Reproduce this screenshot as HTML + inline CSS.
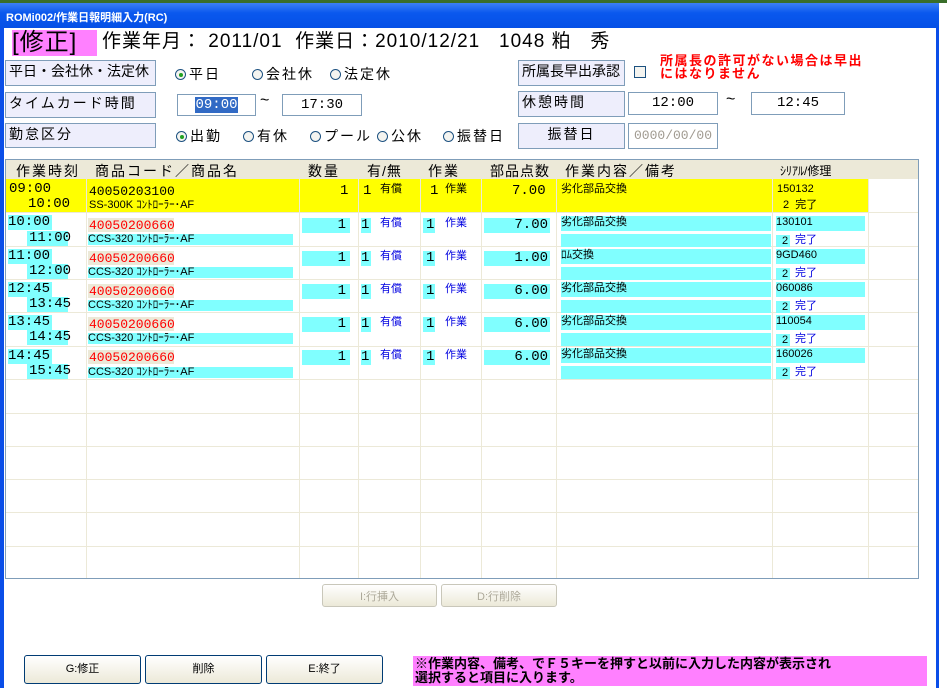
<!DOCTYPE html>
<html><head><meta charset="utf-8"><style>
*{margin:0;padding:0;box-sizing:border-box}
body{width:947px;height:688px;background:#fff;position:relative;overflow:hidden;font-family:"Liberation Sans","Noto Sans CJK JP",sans-serif;color:#000}
.a{position:absolute;white-space:nowrap}
.lbl{position:absolute;background:#eeeefc;border:1px solid #7f9db9;font-size:14px;padding:1px 3px;line-height:18px;letter-spacing:2px;white-space:nowrap;overflow:hidden}
.in{position:absolute;background:#fff;border:1px solid #7f9db9;font-size:14px;text-align:center;line-height:20px;font-family:"Liberation Mono",monospace}
.rb{position:absolute;font-size:14px;line-height:16px;letter-spacing:2px;white-space:nowrap}
.rb i{display:inline-block;width:11px;height:11px;border:1px solid #1c5180;border-radius:50%;vertical-align:-1px;margin-right:3px;background:#f4f4f0;position:relative}
.rb i.on:after{content:"";position:absolute;left:3px;top:3px;width:4px;height:4px;background:#21a121;border-radius:50%}
.c{position:absolute;background:#80ffff;white-space:nowrap}
.t{font-size:14px;line-height:15px;font-family:"Liberation Mono","Noto Sans CJK JP",monospace}
.s{font-size:11px;line-height:13px}
.bl{color:#0000e0}
.vl{position:absolute;top:160px;width:1px;height:418px;background:#ece9d8}
.hl{position:absolute;left:6px;width:912px;height:1px;background:#ece9d8}
.hd{position:absolute;top:163px;font-size:14px;line-height:16px;letter-spacing:2px;white-space:nowrap}
.btn{position:absolute;border:1px solid #003c74;border-radius:3px;background:linear-gradient(#fff,#ece9d8);font-size:11px;text-align:center;line-height:24px}
</style></head><body>
<div class="a" style="left:0;top:0;width:947px;height:3px;background:#3a6e2a"></div>
<div class="a" style="left:0;top:3px;width:939px;height:25px;background:linear-gradient(#3d80f5,#0a58ee 40%,#0550e6)"></div>
<div class="a" style="left:6px;top:9px;color:#fff;font-size:11px;font-weight:bold">ROMi002/作業日報明細入力(RC)</div>
<div class="a" style="left:0;top:28px;width:4px;height:660px;background:#0a4ee8"></div>
<div class="a" style="left:936px;top:28px;width:3px;height:660px;background:#0a4ee8"></div>

<div class="a" style="left:12px;top:30px;width:85px;height:26px;background:#ff80ff;font-size:24px;line-height:26px;letter-spacing:1px">[修正]</div>
<div class="a" style="left:102px;top:30px;font-size:19px;line-height:24px;letter-spacing:1px">作業年月： 2011/01&nbsp; 作業日：2010/12/21&nbsp;&nbsp; 1048 粕&nbsp;&nbsp; 秀</div>

<div class="lbl" style="left:5px;top:60px;width:151px;height:26px;letter-spacing:0">平日・会社休・法定休</div>
<div class="lbl" style="left:5px;top:92px;width:151px;height:26px">タイムカード時間</div>
<div class="lbl" style="left:5px;top:123px;width:151px;height:25px">勤怠区分</div>
<div class="rb" style="left:175px;top:66px"><i class="on"></i>平日</div>
<div class="rb" style="left:252px;top:66px"><i></i>会社休</div>
<div class="rb" style="left:330px;top:66px"><i></i>法定休</div>
<div class="in" style="left:177px;top:94px;width:79px;height:22px"><span style="background:#316ac5;color:#fff">09:00</span></div>
<div class="a" style="left:260px;top:92px;font-size:16px">~</div>
<div class="in" style="left:282px;top:94px;width:80px;height:22px">17:30</div>
<div class="rb" style="left:176px;top:128px"><i class="on"></i>出勤</div>
<div class="rb" style="left:243px;top:128px"><i></i>有休</div>
<div class="rb" style="left:310px;top:128px"><i></i>プール</div>
<div class="rb" style="left:377px;top:128px"><i></i>公休</div>
<div class="rb" style="left:443px;top:128px"><i></i>振替日</div>

<div class="lbl" style="left:518px;top:60px;width:107px;height:26px;letter-spacing:0">所属長早出承認</div>
<div class="a" style="left:634px;top:66px;width:12px;height:12px;border:1px solid #1c5180;background:#f4f4f0"></div>
<div class="a" style="left:660px;top:54px;color:#f00;font-weight:bold;font-size:13px;line-height:13px;letter-spacing:1.5px">所属長の許可がない場合は早出<br>にはなりません</div>
<div class="lbl" style="left:518px;top:91px;width:107px;height:26px">休憩時間</div>
<div class="in" style="left:628px;top:92px;width:90px;height:23px">12:00</div>
<div class="a" style="left:726px;top:91px;font-size:16px">~</div>
<div class="in" style="left:751px;top:92px;width:94px;height:23px">12:45</div>
<div class="lbl" style="left:518px;top:123px;width:107px;height:26px;text-align:center">振替日</div>
<div class="in" style="left:628px;top:123px;width:90px;height:26px;color:#a09a90;line-height:24px;font-size:13px">0000/00/00</div>

<!-- grid -->
<div class="a" style="left:5px;top:159px;width:914px;height:420px;border:1px solid #7f9db9;background:#fff"></div>
<div class="a" style="left:6px;top:160px;width:912px;height:19px;background:#ece9d8"></div>
<div class="a" style="left:6px;top:179px;width:863px;height:33px;background:#ffff00"></div>
<div class="hd" style="left:16px">作業時刻</div>
<div class="hd" style="left:95px">商品コード／商品名</div>
<div class="hd" style="left:308px">数量</div>
<div class="hd" style="left:367px;letter-spacing:1px">有/無</div>
<div class="hd" style="left:428px">作業</div>
<div class="hd" style="left:490px;letter-spacing:1px">部品点数</div>
<div class="hd" style="left:565px">作業内容／備考</div>
<div class="hd" style="left:780px;font-size:12px;letter-spacing:0">ｼﾘｱﾙ/修理</div>
<div class="vl" style="left:86px"></div><div class="vl" style="left:299px"></div><div class="vl" style="left:358px"></div><div class="vl" style="left:420px"></div><div class="vl" style="left:481px"></div><div class="vl" style="left:556px"></div><div class="vl" style="left:772px"></div><div class="vl" style="left:868px"></div>
<div class="hl" style="top:212px"></div><div class="hl" style="top:246px"></div><div class="hl" style="top:279px"></div><div class="hl" style="top:312px"></div><div class="hl" style="top:346px"></div><div class="hl" style="top:379px"></div><div class="hl" style="top:413px"></div><div class="hl" style="top:446px"></div><div class="hl" style="top:479px"></div><div class="hl" style="top:512px"></div><div class="hl" style="top:546px"></div>

<!-- row1 -->
<div class="a t" style="left:9px;top:182px">09:00</div>
<div class="a t" style="left:28px;top:197px">10:00</div>
<div class="a t" style="left:89px;top:184px;font-size:13px">40050203100</div>
<div class="a s" style="left:89px;top:199px">SS-300K ｺﾝﾄﾛｰﾗｰ･AF</div>
<div class="a t" style="left:340px;top:184px">1</div>
<div class="a t" style="left:363px;top:184px">1</div><div class="a s" style="left:380px;top:183px">有償</div>
<div class="a t" style="left:430px;top:184px">1</div><div class="a s" style="left:445px;top:183px">作業</div>
<div class="a t" style="left:512px;top:184px">7.00</div>
<div class="a s" style="left:561px;top:183px">劣化部品交換</div>
<div class="a s" style="left:777px;top:183px">150132</div>
<div class="a s" style="left:783px;top:199px">2&nbsp; 完了</div>

<!-- buttons -->
<div class="btn" style="left:322px;top:584px;width:115px;height:23px;border-color:#c9c7ba;color:#aca899">I:行挿入</div>
<div class="btn" style="left:441px;top:584px;width:116px;height:23px;border-color:#c9c7ba;color:#aca899">D:行削除</div>
<div class="btn" style="left:24px;top:655px;width:117px;height:29px;line-height:27px">G:修正</div>
<div class="btn" style="left:145px;top:655px;width:117px;height:29px;line-height:27px">削除</div>
<div class="btn" style="left:266px;top:655px;width:117px;height:29px;line-height:27px">E:終了</div>
<div class="a" style="left:413px;top:656px;width:514px;height:30px;background:#ff80ff;font-size:13px;font-weight:bold;line-height:14px;padding:1px 2px">※作業内容、備考、でＦ５キーを押すと以前に入力した内容が表示され<br>選択すると項目に入ります。</div>

<!-- row 2 -->
<div class="c t" style="left:8px;top:215px;width:44px;height:15px">10:00</div>
<div class="c t" style="left:27px;top:231px;width:41px;height:15px;padding-left:2px">11:00</div>
<div class="a t" style="left:88px;top:218px;width:86px;height:14px;background:#ece9d8;color:#f00;padding-left:1px;font-size:13px">40050200660</div>
<div class="c s" style="left:88px;top:234px;width:205px;height:11px;line-height:11px">CCS-320 ｺﾝﾄﾛｰﾗｰ･AF</div>
<div class="c t" style="left:302px;top:218px;width:48px;height:15px;text-align:right;padding-right:4px">1</div>
<div class="c t" style="left:361px;top:218px;width:10px;height:15px">1</div><div class="a s bl" style="left:380px;top:217px">有償</div>
<div class="c t" style="left:423px;top:218px;width:12px;height:15px;padding-left:3px">1</div><div class="a s bl" style="left:445px;top:217px">作業</div>
<div class="c t" style="left:484px;top:218px;width:66px;height:15px;text-align:right;padding-right:2px">7.00</div>
<div class="c s" style="left:561px;top:216px;width:210px;height:15px">劣化部品交換</div>
<div class="c" style="left:561px;top:234px;width:210px;height:13px"></div>
<div class="c s" style="left:776px;top:216px;width:89px;height:15px">130101</div>
<div class="c s" style="left:776px;top:235px;width:14px;height:12px;padding-left:6px">2</div><div class="a s bl" style="left:795px;top:234px">完了</div>

<!-- row 3 -->
<div class="c t" style="left:8px;top:249px;width:44px;height:15px">11:00</div>
<div class="c t" style="left:27px;top:264px;width:41px;height:15px;padding-left:2px">12:00</div>
<div class="a t" style="left:88px;top:251px;width:86px;height:14px;background:#ece9d8;color:#f00;padding-left:1px;font-size:13px">40050200660</div>
<div class="c s" style="left:88px;top:267px;width:205px;height:11px;line-height:11px">CCS-320 ｺﾝﾄﾛｰﾗｰ･AF</div>
<div class="c t" style="left:302px;top:251px;width:48px;height:15px;text-align:right;padding-right:4px">1</div>
<div class="c t" style="left:361px;top:251px;width:10px;height:15px">1</div><div class="a s bl" style="left:380px;top:250px">有償</div>
<div class="c t" style="left:423px;top:251px;width:12px;height:15px;padding-left:3px">1</div><div class="a s bl" style="left:445px;top:250px">作業</div>
<div class="c t" style="left:484px;top:251px;width:66px;height:15px;text-align:right;padding-right:2px">1.00</div>
<div class="c s" style="left:561px;top:249px;width:210px;height:15px">ﾛﾑ交換</div>
<div class="c" style="left:561px;top:267px;width:210px;height:13px"></div>
<div class="c s" style="left:776px;top:249px;width:89px;height:15px">9GD460</div>
<div class="c s" style="left:776px;top:268px;width:14px;height:12px;padding-left:6px">2</div><div class="a s bl" style="left:795px;top:267px">完了</div>

<!-- row 4 -->
<div class="c t" style="left:8px;top:282px;width:44px;height:15px">12:45</div>
<div class="c t" style="left:27px;top:297px;width:41px;height:15px;padding-left:2px">13:45</div>
<div class="a t" style="left:88px;top:284px;width:86px;height:14px;background:#ece9d8;color:#f00;padding-left:1px;font-size:13px">40050200660</div>
<div class="c s" style="left:88px;top:300px;width:205px;height:11px;line-height:11px">CCS-320 ｺﾝﾄﾛｰﾗｰ･AF</div>
<div class="c t" style="left:302px;top:284px;width:48px;height:15px;text-align:right;padding-right:4px">1</div>
<div class="c t" style="left:361px;top:284px;width:10px;height:15px">1</div><div class="a s bl" style="left:380px;top:283px">有償</div>
<div class="c t" style="left:423px;top:284px;width:12px;height:15px;padding-left:3px">1</div><div class="a s bl" style="left:445px;top:283px">作業</div>
<div class="c t" style="left:484px;top:284px;width:66px;height:15px;text-align:right;padding-right:2px">6.00</div>
<div class="c s" style="left:561px;top:282px;width:210px;height:15px">劣化部品交換</div>
<div class="c" style="left:561px;top:300px;width:210px;height:13px"></div>
<div class="c s" style="left:776px;top:282px;width:89px;height:15px">060086</div>
<div class="c s" style="left:776px;top:301px;width:14px;height:12px;padding-left:6px">2</div><div class="a s bl" style="left:795px;top:300px">完了</div>

<!-- row 5 -->
<div class="c t" style="left:8px;top:315px;width:44px;height:15px">13:45</div>
<div class="c t" style="left:27px;top:330px;width:41px;height:15px;padding-left:2px">14:45</div>
<div class="a t" style="left:88px;top:317px;width:86px;height:14px;background:#ece9d8;color:#f00;padding-left:1px;font-size:13px">40050200660</div>
<div class="c s" style="left:88px;top:333px;width:205px;height:11px;line-height:11px">CCS-320 ｺﾝﾄﾛｰﾗｰ･AF</div>
<div class="c t" style="left:302px;top:317px;width:48px;height:15px;text-align:right;padding-right:4px">1</div>
<div class="c t" style="left:361px;top:317px;width:10px;height:15px">1</div><div class="a s bl" style="left:380px;top:316px">有償</div>
<div class="c t" style="left:423px;top:317px;width:12px;height:15px;padding-left:3px">1</div><div class="a s bl" style="left:445px;top:316px">作業</div>
<div class="c t" style="left:484px;top:317px;width:66px;height:15px;text-align:right;padding-right:2px">6.00</div>
<div class="c s" style="left:561px;top:315px;width:210px;height:15px">劣化部品交換</div>
<div class="c" style="left:561px;top:333px;width:210px;height:13px"></div>
<div class="c s" style="left:776px;top:315px;width:89px;height:15px">110054</div>
<div class="c s" style="left:776px;top:334px;width:14px;height:12px;padding-left:6px">2</div><div class="a s bl" style="left:795px;top:333px">完了</div>

<!-- row 6 -->
<div class="c t" style="left:8px;top:349px;width:44px;height:15px">14:45</div>
<div class="c t" style="left:27px;top:364px;width:41px;height:15px;padding-left:2px">15:45</div>
<div class="a t" style="left:88px;top:350px;width:86px;height:14px;background:#ece9d8;color:#f00;padding-left:1px;font-size:13px">40050200660</div>
<div class="c s" style="left:88px;top:367px;width:205px;height:11px;line-height:11px">CCS-320 ｺﾝﾄﾛｰﾗｰ･AF</div>
<div class="c t" style="left:302px;top:350px;width:48px;height:15px;text-align:right;padding-right:4px">1</div>
<div class="c t" style="left:361px;top:350px;width:10px;height:15px">1</div><div class="a s bl" style="left:380px;top:349px">有償</div>
<div class="c t" style="left:423px;top:350px;width:12px;height:15px;padding-left:3px">1</div><div class="a s bl" style="left:445px;top:349px">作業</div>
<div class="c t" style="left:484px;top:350px;width:66px;height:15px;text-align:right;padding-right:2px">6.00</div>
<div class="c s" style="left:561px;top:348px;width:210px;height:15px">劣化部品交換</div>
<div class="c" style="left:561px;top:366px;width:210px;height:13px"></div>
<div class="c s" style="left:776px;top:348px;width:89px;height:15px">160026</div>
<div class="c s" style="left:776px;top:367px;width:14px;height:12px;padding-left:6px">2</div><div class="a s bl" style="left:795px;top:366px">完了</div>
</body></html>
